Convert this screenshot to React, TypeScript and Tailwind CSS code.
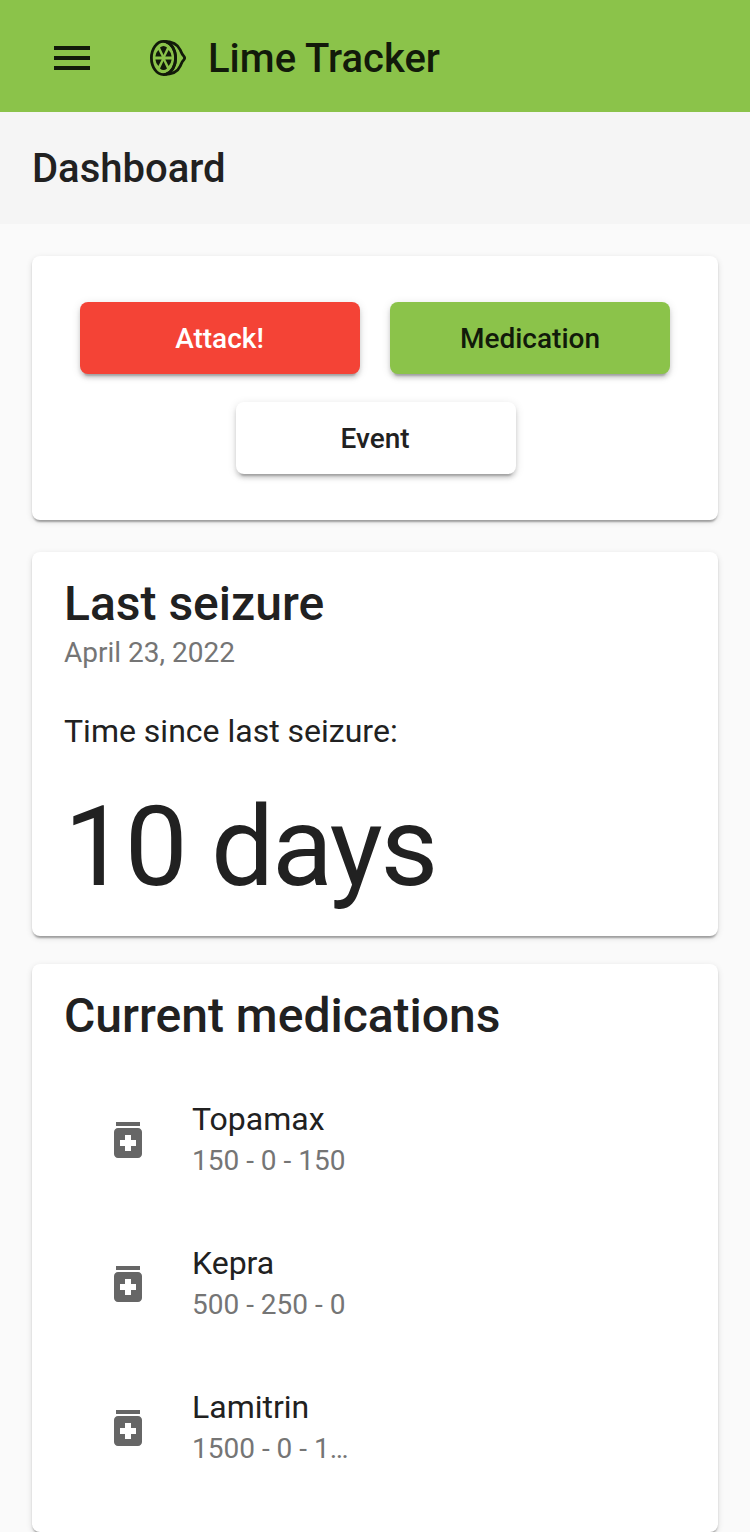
const meds = [
  { name: "Topamax", dose: "150 - 0 - 150" },
  { name: "Kepra", dose: "500 - 250 - 0" },
  { name: "Lamitrin", dose: "1500 - 0 - 1…" },
];

const cardClass =
  "rounded-lg bg-white shadow-[0_4px_2px_-2px_rgba(0,0,0,0.2),0_2px_2px_0_rgba(0,0,0,0.14),0_2px_6px_0_rgba(0,0,0,0.12)]";
const buttonClass =
  "flex h-[72px] w-[280px] items-center justify-center rounded-lg pt-0.5 text-[28px] font-medium shadow-[0_6px_2px_-4px_rgba(0,0,0,0.2),0_4px_4px_0_rgba(0,0,0,0.14),0_2px_10px_0_rgba(0,0,0,0.12)]";

function LimeIcon() {
  return (
    <svg viewBox="0 0 36 36" className="ml-[54px] size-9" fill="currentColor">
      <g fill="none" stroke="currentColor" strokeWidth="2.800" strokeLinejoin="round">
        <ellipse cx="13.500" cy="18" rx="12.100" ry="16.600" />
        <path d="M13.500 1.400C22 1.400 28 4.800 30.300 10c1 2.400 1.400 4.300 3.600 6.300q1.400 1.700 0 3.400c-2.200 2-2.600 3.900-3.600 6.300-2.300 5.200-8.300 8.600-16.800 8.600" />
        <path d="M16 1.900C21.500 3.500 25.600 10 25.600 18S21.500 32.500 16 34.100" />
      </g>
      <path d="M10 7.500q3.500-3 7 0L13.500 15zM10 28.500q3.500 3 7 0L13.500 21zM8.400 10l3.300 6.500H5.400q.4-4 3-6.500zM18.600 10l-3.300 6.500h6.300q-.4-4-3-6.500zM8.400 26l3.300-6.500H5.400q.4 4 3 6.500zM18.600 26l-3.300-6.500h6.300q-.4 4-3 6.500z" />
    </svg>
  );
}

function MedicationIcon() {
  return (
    <svg viewBox="0 0 24 24" className="size-12 text-[#666666]" fill="currentColor">
      <path d="M6 3h12v2H6zm11 3H7c-1.100 0-2 .9-2 2v11c0 1.100.9 2 2 2h10c1.100 0 2-.9 2-2V8c0-1.100-.9-2-2-2zm-1 9h-2.500v2.500h-3V15H8v-3h2.500V9.500h3V12H16v3z" />
    </svg>
  );
}

export default function App() {
  return (
    <div className="h-[1532px] overflow-hidden bg-[#fafafa] font-[Roboto,sans-serif] text-[#212121] antialiased">
      <header className="flex h-28 items-center bg-[#8bc34a] pt-1 pl-12 text-[#121a0a]">
        <svg viewBox="0 0 24 24" className="size-12" fill="currentColor">
          <path d="M3 18h18v-2H3v2zm0-5h18v-2H3v2zm0-7v2h18V6H3z" />
        </svg>
        <LimeIcon />
        <h1 className="ml-[22px] pt-0.5 text-[40px] font-medium">Lime Tracker</h1>
      </header>
      <div className="flex h-28 items-center bg-[#f5f5f5] px-8 pt-0.5">
        <h2 className="text-[40px] font-medium">Dashboard</h2>
      </div>
      <main className="px-8 pt-8">
        <section className={`${cardClass} mb-8 flex h-[264px] flex-wrap content-start justify-center gap-x-[30px] gap-y-7 pt-[46px]`}>
          <button className={`${buttonClass} bg-[#f44336] pr-px text-white`}>Attack!</button>
          <button className={`${buttonClass} bg-[#8bc34a] text-[#121a0a]`}>Medication</button>
          <button className={`${buttonClass} ml-0.5 bg-white pr-0.5`}>Event</button>
        </section>
        <section className={`${cardClass} mb-7 h-[384px] px-8 pt-5`}>
          <h2 className="text-5xl leading-[64px] font-medium">Last seizure</h2>
          <p className="pt-px text-[28px] leading-8 text-[#757575]">April 23, 2022</p>
          <p className="mt-[42px] text-[32px] leading-10">Time since last seizure:</p>
          <p className="mt-8 text-[112px] leading-[128px] tracking-[-0.02em]">10 days</p>
        </section>
        <section className={`${cardClass} h-[568px] px-8 pt-5`}>
          <h2 className="text-5xl leading-[64px] font-medium">Current medications</h2>
          <ul className="mt-5">
            {meds.map((med) => (
              <li key={med.name} className="flex h-36 items-center pl-10">
                <MedicationIcon />
                <div className="ml-10 pb-0.5">
                  <p className="text-[32px] leading-[44px]">{med.name}</p>
                  <p className="text-[28px] leading-10 text-[#757575]">{med.dose}</p>
                </div>
              </li>
            ))}
          </ul>
        </section>
      </main>
    </div>
  );
}
